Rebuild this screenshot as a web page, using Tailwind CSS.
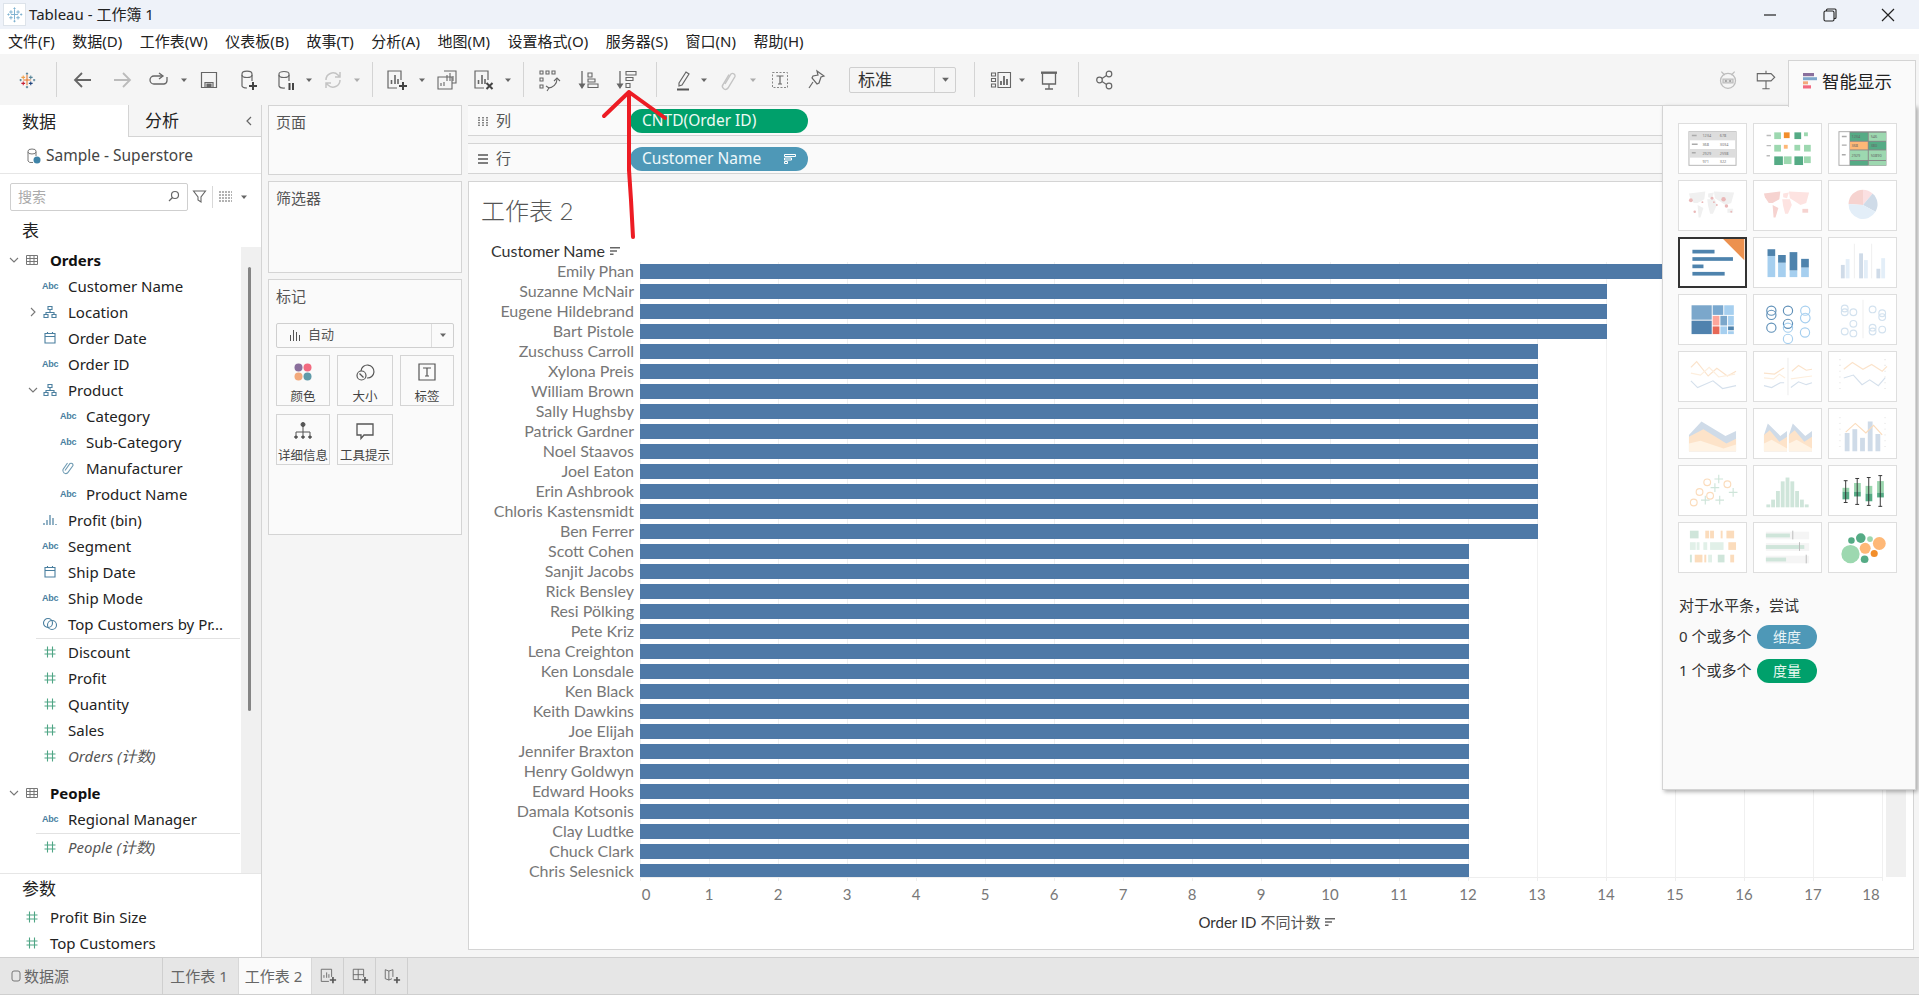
<!DOCTYPE html>
<html lang="zh">
<head>
<meta charset="UTF-8">
<title>Tableau - 工作簿 1</title>
<script src="https://cdn.jsdelivr.net/npm/@tailwindcss/browser@4"></script>
</head>
<body class="relative h-[995px] w-[1919px] overflow-hidden bg-[#f5f5f5] font-['Noto_Sans','Noto_Sans_CJK_SC',sans-serif] text-[15px] text-[#333]">

<svg class="hidden">
  <symbol id="dd" viewBox="0 0 8 8"><path d="M1 2.500h6L4 6z" fill="#666"/></symbol>
  <symbol id="logo" viewBox="0 0 24 24" fill="none" stroke-width="1.400">
    <path d="M12 5v14M7 12h10" stroke="#e8762b"/><path d="M7 6v5M4.500 8.500h5" stroke="#f0a04b"/><path d="M17 6v5M14.500 8.500h5" stroke="#59879b"/>
    <path d="M7 14v5M4.500 16.500h5" stroke="#c72035"/><path d="M17 14v5M14.500 16.500h5" stroke="#1f447e"/>
    <path d="M12 2v3M10.500 3.500h3M12 20v3M10.500 21.500h3M2 12h3M3.500 10.500v3M20 12h3M21.500 10.500v3" stroke="#5b879b"/>
  </symbol>
  <symbol id="logo-pale" viewBox="0 0 24 24" fill="none" stroke-width="1.400" stroke="#7fb2d0">
    <path d="M12 5v14M7 12h10M7 6v5M4.500 8.500h5M17 6v5M14.500 8.500h5M7 14v5M4.500 16.500h5M17 14v5M14.500 16.500h5M12 2v3M10.500 3.500h3M12 20v3M10.500 21.500h3M2 12h3M3.500 10.500v3M20 12h3M21.500 10.500v3"/>
  </symbol>
  <symbol id="tab-orders" viewBox="0 0 16 16" fill="none" stroke="#777"><path d="M2.500 3.500h11v9h-11zM2.500 6.500h11M2.500 9.500h11M6 3.500v9M10 3.500v9"/></symbol>
  <symbol id="hier" viewBox="0 0 16 16" fill="none" stroke="#4a7f9f" stroke-width="1.100"><path d="M6 2.500h4v3H6zM2 10.500h4v3H2zM10 10.500h4v3h-4zM8 5.500v3M4 10.500v-2h8v2"/></symbol>
  <symbol id="cal" viewBox="0 0 16 16" fill="none" stroke="#4a7f9f" stroke-width="1.100"><path d="M3 3.500h10v9.500H3zM3 6.500h10M5.500 2v2M10.500 2v2"/></symbol>
  <symbol id="clip" viewBox="0 0 16 16" fill="none" stroke="#6f9bb3" stroke-width="1.100"><path d="M5 10.500l5-7a2 2 0 0 1 3 2l-5.500 7.500a3 3 0 0 1-4.500-3.500L7.500 3"/></symbol>
  <symbol id="bin" viewBox="0 0 16 16" stroke="#4a7f9f" stroke-width="1.200"><path d="M2 13v-2M5 13V8M8 13V3M11 13V6M14 13v-1"/></symbol>
  <symbol id="sets" viewBox="0 0 16 16" fill="none" stroke="#4a7f9f" stroke-width="1.100"><circle cx="6" cy="7" r="4.500"/><circle cx="10" cy="9" r="4.500"/></symbol>
  <symbol id="hash" viewBox="0 0 16 16" stroke="#4fa585" stroke-width="1.100"><path d="M5.500 2.500v11M10.500 2.500v11M2.500 6h11M2.500 10h11"/></symbol>
  <symbol id="sort" viewBox="0 0 12 10" fill="#666"><path d="M1 1h10v1.500H1zM1 4.200h7v1.500H1zM1 7.400h3.500v1.500H1z"/></symbol>
  <symbol id="newstuff" viewBox="0 0 20 20" fill="none"><path d="M14 11V2.500H2.500V16H11" stroke="#666"/><path d="M5.500 12V9M8.500 12V6M11 12V8" stroke="#666"/><path d="M15.500 11v7M12 14.500h7" stroke="#555" stroke-width="1.800"/></symbol>
</svg>

<!-- title bar -->
<div class="flex h-[29px] items-center justify-between bg-[#eef2f9]">
  <div class="flex items-center">
    <svg class="ml-[3px] h-[23px] w-[23px] border border-[#dde3ea] bg-white p-[2px]"><use href="#logo-pale"/></svg>
    <span class="ml-[3px] text-[15px] text-[#222]">Tableau - 工作簿 1</span>
  </div>
  <div class="flex items-center">
    <svg class="mr-[46px] h-[14px] w-[14px]" viewBox="0 0 14 14"><path d="M1 7h12" stroke="#222" stroke-width="1.200"/></svg>
    <svg class="mr-[44px] h-[14px] w-[14px]" viewBox="0 0 14 14" fill="none" stroke="#222" stroke-width="1.100"><rect x="1" y="3" width="10" height="10" rx="1.500"/><path d="M3.500 3V2a1 1 0 0 1 1-1H12a1 1 0 0 1 1 1v7.500a1 1 0 0 1-1 1h-1"/></svg>
    <svg class="mr-[24px] h-[14px] w-[14px]" viewBox="0 0 14 14" stroke="#222" stroke-width="1.200"><path d="M1 1l12 12M13 1L1 13"/></svg>
  </div>
</div>

<!-- menu -->
<div class="flex h-[25px] items-center gap-[17.500px] bg-white pl-[8px] text-[15px] text-[#222]">
  <span>文件(F)</span><span>数据(D)</span><span>工作表(W)</span><span>仪表板(B)</span><span>故事(T)</span><span>分析(A)</span><span>地图(M)</span><span>设置格式(O)</span><span>服务器(S)</span><span>窗口(N)</span><span>帮助(H)</span>
</div>

<!-- toolbar -->
<div class="flex h-[51px] items-center bg-[#f5f5f5]">
  <svg class="ml-[18px] h-[18px] w-[18px]"><use href="#logo"/></svg>
  <div class="ml-[20px] h-[35px] w-px bg-[#d4d4d4]"></div>
  <svg class="ml-[14px] h-[24px] w-[24px]" viewBox="0 0 24 24" fill="none" stroke="#666" stroke-width="1.800"><path d="M20 12H5M11 5l-7 7 7 7"/></svg>
  <svg class="ml-[15px] h-[24px] w-[24px]" viewBox="0 0 24 24" fill="none" stroke="#bbb" stroke-width="1.800"><path d="M4 12h15M13 5l7 7-7 7"/></svg>
  <svg class="ml-[13px] h-[24px] w-[24px]" viewBox="0 0 24 24" fill="none" stroke="#666" stroke-width="1.300"><path d="M15 8H7a4 4 0 0 0 0 8h10a3.500 3.500 0 0 0 3-3.500V9"/><path d="M12 5l4 3-4 3"/></svg>
  <svg class="ml-[9px] h-[8px] w-[8px]"><use href="#dd"/></svg>
  <svg class="ml-[9px] h-[24px] w-[24px]" viewBox="0 0 24 24" fill="none" stroke="#666" stroke-width="1.200"><path d="M4.500 4.500h15v15h-15zM8 19.500v-5h8v5"/><path d="M10 16h4v3.500h-4z" fill="#666"/></svg>
  <svg class="ml-[15px] h-[24px] w-[24px]" viewBox="0 0 24 24" fill="none" stroke="#666" stroke-width="1.200"><path d="M6 6a4.500 2.500 0 0 1 10 0v7M6 6v12a5 2.500 0 0 0 5 2"/><path d="M6 7a5 2.500 0 0 0 10 0"/><path d="M17 14v8M13 18h8" stroke="#444" stroke-width="2"/></svg>
  <svg class="ml-[14px] h-[24px] w-[24px]" viewBox="0 0 24 24" fill="none" stroke="#666" stroke-width="1.200"><path d="M5 6a5 2.500 0 0 1 10 0v7M5 6v12a5 2.500 0 0 0 6 2"/><path d="M5 7a5 2.500 0 0 0 10 0"/><path d="M15.500 15v7M19 15v7" stroke="#444" stroke-width="2"/></svg>
  <svg class="ml-[7px] h-[8px] w-[8px]"><use href="#dd"/></svg>
  <svg class="ml-[8px] h-[24px] w-[24px]" viewBox="0 0 24 24" fill="none" stroke="#c4c4c4" stroke-width="1.500"><path d="M5 12a7 7 0 0 1 12-5l2 2M19 12a7 7 0 0 1-12 5l-2-2M19 4v5h-5M5 20v-5h5"/></svg>
  <svg class="ml-[8px] h-[8px] w-[8px] opacity-50"><use href="#dd"/></svg>
  <div class="ml-[11px] h-[35px] w-px bg-[#d4d4d4]"></div>
  <svg class="ml-[12px] h-[24px] w-[24px]" viewBox="0 0 24 24" fill="none" stroke="#666" stroke-width="1.200"><path d="M16 12V3H3v17h9"/><path d="M6.500 16v-4M10 16V7M13 16v-5" stroke-width="1.600"/><path d="M18 14v8M14 18h8" stroke="#444" stroke-width="2"/></svg>
  <svg class="ml-[9px] h-[8px] w-[8px]"><use href="#dd"/></svg>
  <svg class="ml-[9px] h-[24px] w-[24px]" viewBox="0 0 24 24" fill="none" stroke="#666" stroke-width="1.100"><path d="M9 3h12v12h-4M3 9h14v12H3z"/><path d="M12 13V7M15 13V5M18 13V8M6 18v-3M9 18v-4"/></svg>
  <svg class="ml-[13px] h-[24px] w-[24px]" viewBox="0 0 24 24" fill="none" stroke="#666" stroke-width="1.200"><path d="M16 12V3H3v17h9"/><path d="M6.500 16v-4M10 16V7M13 16v-5" stroke-width="1.600"/><path d="M14.500 15l6 6M20.500 15l-6 6" stroke="#444" stroke-width="2"/></svg>
  <svg class="ml-[8px] h-[8px] w-[8px]"><use href="#dd"/></svg>
  <div class="ml-[11px] h-[35px] w-px bg-[#d4d4d4]"></div>
  <svg class="ml-[13px] h-[24px] w-[24px]" viewBox="0 0 24 24" fill="none" stroke="#666" stroke-width="1.100"><path d="M3 3h3v3H3zM9 3h3v3H9zM15 3h3v3h-3zM3 10h3v3H3zM3 17h3v3H3zM11 20a9 9 0 0 0 9-9"/><path d="M17 13l3-3 3 3M9 18l3 2-2 3"/></svg>
  <svg class="ml-[16px] h-[24px] w-[24px]" viewBox="0 0 24 24" fill="none" stroke="#666" stroke-width="1.100"><path d="M5 3v16" stroke-width="1.300"/><path d="M2.500 16h5L5 20z" fill="#666"/><path d="M11 5h4v4h-4zM11 11h7v3h-7zM11 16h10v3.500H11z"/></svg>
  <svg class="ml-[14px] h-[24px] w-[24px]" viewBox="0 0 24 24" fill="none" stroke="#666" stroke-width="1.100"><path d="M5 3v16" stroke-width="1.300"/><path d="M2.500 16h5L5 20z" fill="#666"/><path d="M11 3.500h10V7H11zM11 9.500h7v3h-7zM11 15.500h4v4h-4z"/></svg>
  <div class="ml-[17px] h-[35px] w-px bg-[#d4d4d4]"></div>
  <svg class="ml-[14px] h-[24px] w-[24px]" viewBox="0 0 24 24" fill="none" stroke="#666" stroke-width="1.200"><path d="M8 15l7-11 3 2-7 11-3 1z"/><path d="M6 21.500h12" stroke="#555" stroke-width="2"/></svg>
  <svg class="ml-[5px] h-[8px] w-[8px]"><use href="#dd"/></svg>
  <svg class="ml-[9px] h-[24px] w-[24px]" viewBox="0 0 24 24" fill="none" stroke="#c4c4c4" stroke-width="1.400"><path d="M8 16l6-10a2.500 2.500 0 0 1 4 2.500l-7 11.500a3 3 0 0 1-5-3.500l6-10"/></svg>
  <svg class="ml-[8px] h-[8px] w-[8px] opacity-50"><use href="#dd"/></svg>
  <svg class="ml-[11px] h-[24px] w-[24px]" viewBox="0 0 24 24" fill="none" stroke="#888"><path d="M4.500 4.500h15v15h-15z" stroke-dasharray="2 1.500"/><path d="M8.500 8h7M12 8v8M10 16h4" stroke="#666" stroke-width="1.200"/></svg>
  <svg class="ml-[13px] h-[24px] w-[24px]" viewBox="0 0 24 24" fill="none" stroke="#666" stroke-width="1.200"><path d="M12 3l7 5-3 1-2 6-2 1-5-6 1-2 5-1zM8 14l-4 6"/></svg>
  <div class="ml-[20px] flex h-[26px] w-[107px] items-center rounded-[2px] border border-[#cfcfcf] bg-[#f5f5f5]">
    <span class="flex-1 pl-[8px] text-[17px] text-[#333]">标准</span>
    <div class="flex h-full w-[21px] items-center justify-center border-l border-[#d4d4d4]"><svg class="h-[9px] w-[9px]"><use href="#dd"/></svg></div>
  </div>
  <div class="ml-[18px] h-[35px] w-px bg-[#d4d4d4]"></div>
  <svg class="ml-[14px] h-[24px] w-[24px]" viewBox="0 0 24 24" fill="none" stroke="#666" stroke-width="1.100"><path d="M2.500 5h4v3h-4zM2.500 10.500h4v3h-4zM2.500 16h4v3h-4zM9 4.500h12.500v15H9z"/><path d="M12 17v-4M15 17V8M18 17v-6" stroke-width="1.800"/></svg>
  <svg class="ml-[5px] h-[8px] w-[8px]"><use href="#dd"/></svg>
  <svg class="ml-[11px] h-[24px] w-[24px]" viewBox="0 0 24 24" fill="none" stroke="#666" stroke-width="1.300"><path d="M4 5h16M5.500 5v11h13V5M12 16v5M8 21h8"/><path d="M4 4.500h16" stroke-width="2"/></svg>
  <div class="ml-[17px] h-[35px] w-px bg-[#d4d4d4]"></div>
  <svg class="ml-[14px] h-[24px] w-[24px]" viewBox="0 0 24 24" fill="none" stroke="#666" stroke-width="1.200"><circle cx="16" cy="6" r="2.800"/><circle cx="6.500" cy="12" r="2.800"/><circle cx="16" cy="18" r="2.800"/><path d="M9 10.500l4.500-3M9 13.500l4.500 3"/></svg>
  <div class="flex-1"></div>
  <svg class="mr-[17px] h-[20px] w-[20px]" viewBox="0 0 24 24" fill="none" stroke="#bdbdbd" stroke-width="1.500"><circle cx="12" cy="13" r="9"/><path d="M4 2l4 4M20 2l-4 4"/><path d="M6 11h12v4.500H6z" fill="#ddd"/><circle cx="9.500" cy="13.200" r="1.200" fill="#999" stroke="none"/><circle cx="14.500" cy="13.200" r="1.200" fill="#999" stroke="none"/></svg>
  <svg class="mr-[142px] h-[22px] w-[22px]" viewBox="0 0 24 24" fill="none" stroke="#666" stroke-width="1.200"><path d="M2.500 5h15l4 4-4 4h-15zM12 13v8M8 21.500h8M12 2v3"/></svg>
</div>

<!-- main -->
<div class="flex h-[852px]">
  <!-- data pane -->
  <div class="flex w-[262px] flex-col border-r border-[#d4d4d4] bg-white">
    <div class="flex h-[32px]">
      <div class="flex w-[128px] items-center pl-[22px] pt-[1px] text-[17px] text-[#222]">数据</div>
      <div class="flex flex-1 items-center justify-between border-b border-l border-[#d4d4d4] bg-[#f5f5f5] pl-[16px] pr-[8px] pt-[1px] text-[17px] text-[#222]">分析
        <svg class="h-[12px] w-[8px]" viewBox="0 0 8 12" fill="none" stroke="#666" stroke-width="1.200"><path d="M6 2L2 6l4 4"/></svg>
      </div>
    </div>
    <div class="flex h-[37px] items-center border-b border-[#e6e6e6] pl-[25px] pt-[1px] text-[#444]">
      <svg class="h-[18px] w-[18px]" viewBox="0 0 18 18" fill="none" stroke="#777"><path d="M3 4a4 2 0 0 1 8 0v5M3 4v10a4 2 0 0 0 5 1.500M3 5a4 2 0 0 0 8 0"/><circle cx="12" cy="13" r="3.500" fill="#3f84a8" stroke="none"/></svg>
      <span class="ml-[3px] text-[15.500px]">Sample - Superstore</span>
    </div>
    <div class="flex h-[46px] items-center pl-[10px] pb-[1px]">
      <div class="flex h-[28px] w-[178px] items-center justify-between rounded-[2px] border border-[#cfcfcf] px-[7px] text-[14px] text-[#aaa]">搜索
        <svg class="h-[13px] w-[13px]" viewBox="0 0 13 13" fill="none" stroke="#666" stroke-width="1.200"><circle cx="8" cy="5" r="3.500"/><path d="M5.500 7.500L2 11"/></svg>
      </div>
      <svg class="ml-[4px] h-[15px] w-[15px]" viewBox="0 0 15 15" fill="none" stroke="#666" stroke-width="1.100"><path d="M1.500 2h12L9 8v5l-3-2V8z"/></svg>
      <div class="ml-[5px] h-[22px] w-px bg-[#d8d8d8]"></div>
      <svg class="ml-[6px] h-[13px] w-[13px]" viewBox="0 0 13 13" stroke="#666"><path d="M0 2h13M0 5h13M0 8h13M0 11h13" stroke-dasharray="2 1"/></svg>
      <svg class="ml-[8px] h-[8px] w-[8px]"><use href="#dd"/></svg>
    </div>
    <div class="flex h-[27px] items-start pl-[22px] text-[17px] leading-[22px] text-[#222]">表</div>
    <div class="relative h-[626px] overflow-hidden" id="fields"></div>
    <div class="border-t border-[#e6e6e6]">
      <div class="flex h-[30px] items-center pl-[22px] text-[17px] text-[#222]">参数</div>
      <div class="flex h-[26px] items-center pl-[24px]"><svg class="h-[16px] w-[16px]"><use href="#hash"/></svg><span class="ml-[10px] text-[#222]">Profit Bin Size</span></div>
      <div class="flex h-[26px] items-center pl-[24px]"><svg class="h-[16px] w-[16px]"><use href="#hash"/></svg><span class="ml-[10px] text-[#222]">Top Customers</span></div>
    </div>
  </div>

  <!-- cards column -->
  <div class="flex w-[206px] flex-col gap-[6px] px-[6px] text-[15px] text-[#555]">
    <div class="h-[70px] border border-[#d4d4d4] bg-[#fafafa] px-[7px] py-[5px]">页面</div>
    <div class="h-[92px] border border-[#d4d4d4] bg-[#fafafa] px-[7px] py-[5px]">筛选器</div>
    <div class="h-[256px] border border-[#d4d4d4] bg-[#fafafa] px-[7px] py-[5px]">
      <div>标记</div>
      <div class="mt-[15px] flex h-[25px] items-center rounded-[2px] border border-[#cfcfcf] bg-[#fafafa] text-[13px]">
        <svg class="ml-[11px] h-[14px] w-[14px]" viewBox="0 0 14 14" stroke="#555"><path d="M2.500 13V7M5.500 13V2M8.500 13V4M11.500 13V7"/></svg>
        <span class="ml-[6px] flex-1">自动</span>
        <div class="flex h-full w-[22px] items-center justify-center border-l border-[#ddd]"><svg class="h-[8px] w-[8px]"><use href="#dd"/></svg></div>
      </div>
      <div class="mt-[7px] grid grid-cols-[54px_56px_54px] gap-x-[7px] gap-y-[8px] text-[12.500px] text-[#444]">
        <div class="flex h-[51px] flex-col items-center border border-[#d4d4d4] pt-[6px]">
          <svg class="h-[20px] w-[20px]" viewBox="0 0 20 20"><circle cx="5.500" cy="5.500" r="4" fill="#8a6f9c"/><circle cx="14.500" cy="5.500" r="4" fill="#f26a80"/><circle cx="5.500" cy="14.500" r="4" fill="#f2a97c"/><circle cx="14.500" cy="14.500" r="4" fill="#5f9aa8"/></svg>
          <span class="mt-[7px] leading-[16px]">颜色</span></div>
        <div class="flex h-[51px] flex-col items-center border border-[#d4d4d4] pt-[6px]">
          <svg class="h-[20px] w-[20px]" viewBox="0 0 20 20" fill="none" stroke="#555" stroke-width="1.200"><path d="M6 9a6.500 6.500 0 1 1 6 7"/><circle cx="6.500" cy="13.500" r="4.500"/><path d="M4.500 11.500l4 4"/></svg>
          <span class="mt-[7px] leading-[16px]">大小</span></div>
        <div class="flex h-[51px] flex-col items-center border border-[#d4d4d4] pt-[6px]">
          <svg class="h-[20px] w-[20px]" viewBox="0 0 20 20" fill="none" stroke="#555" stroke-width="1.200"><path d="M2 2h16v16H2zM6 6h8M10 6v8M8 14h4"/></svg>
          <span class="mt-[7px] leading-[16px]">标签</span></div>
        <div class="flex h-[51px] flex-col items-center border border-[#d4d4d4] pt-[6px]">
          <svg class="h-[20px] w-[20px]" viewBox="0 0 20 20" fill="#555" stroke="#555"><circle cx="10" cy="3.500" r="2"/><circle cx="3" cy="16" r="1.300"/><circle cx="10" cy="16" r="1.300"/><circle cx="17" cy="16" r="1.300"/><path d="M10 5v9M3 14v-3h14v3" fill="none"/></svg>
          <span class="mt-[7px] whitespace-nowrap leading-[16px]">详细信息</span></div>
        <div class="flex h-[51px] flex-col items-center border border-[#d4d4d4] pt-[6px]">
          <svg class="h-[20px] w-[20px]" viewBox="0 0 20 20" fill="none" stroke="#555" stroke-width="1.300"><path d="M2 3h16v11H9l-3 3.500V14H2z"/></svg>
          <span class="mt-[7px] whitespace-nowrap leading-[16px]">工具提示</span></div>
      </div>
    </div>
  </div>

  <!-- worksheet -->
  <div class="flex w-[1446px] flex-col">
    <div class="flex h-[31px] items-center border-y border-[#d4d4d4] bg-[#fafafa] text-[#555]">
      <svg class="ml-[9px] h-[12px] w-[12px]" viewBox="0 0 12 12" stroke="#555" stroke-width="1.400"><path d="M2 2v9M6 2v9M10 2v9" stroke-dasharray="1.500 1"/></svg>
      <span class="ml-[7px] w-[134px]">列</span>
      <div class="flex h-[24px] w-[178px] items-center rounded-full bg-[#00a06b] pl-[12px] pt-[1px] text-[15.500px] text-[#eefaf4]">CNTD(Order ID)</div>
    </div>
    <div class="mt-[7px] flex h-[31px] items-center border-y border-[#d4d4d4] bg-[#fafafa] text-[#555]">
      <svg class="ml-[9px] h-[12px] w-[12px]" viewBox="0 0 12 12" stroke="#555" stroke-width="1.400"><path d="M1 2h10M1 6h10M1 10h10"/></svg>
      <span class="ml-[7px] w-[134px]">行</span>
      <div class="flex h-[24px] w-[178px] items-center justify-between rounded-full bg-[#4e98b7] pl-[12px] pr-[12px] pt-[1px] text-[15.500px] text-[#eef8fb]">Customer Name
        <svg class="h-[10px] w-[12px]" viewBox="0 0 12 10" fill="none" stroke="#fff"><path d="M.5.500h11v2H.5zM.5 4h7v2h-7zM.5 7.500h3v2h-3z"/></svg>
      </div>
    </div>
    <div class="mt-[7px] h-[769px] border border-[#d4d4d4] bg-white font-['Lato','Noto_Sans_CJK_SC',sans-serif]">
      <div class="flex h-[58px] items-center pl-[12px] text-[24px] font-light text-[#555]">工作表 2</div>
      <div class="flex h-[21px] items-center pl-[22px] text-[16px] text-[#333]">Customer Name<svg class="ml-[4px] h-[10px] w-[12px]"><use href="#sort"/></svg></div>
      <div class="relative mt-[1px] h-[615px]" id="plot"></div>
      <div class="relative h-[34px] text-[15px] text-[#777]" id="axis"></div>
      <div class="flex items-center justify-center pl-[153px] text-[15px] text-[#555]"><span class="text-[#333]">Order ID</span><span class="ml-[4px]">不同计数</span><svg class="ml-[4px] h-[10px] w-[12px]"><use href="#sort"/></svg></div>
    </div>
  </div>
</div>

<!-- sheet tabs -->
<div class="flex h-[38px] items-stretch border-y border-[#cfcfcf] bg-[#e6e6e6] text-[15px] text-[#666]">
  <div class="flex w-[163px] items-center border-r border-[#cfcfcf] pl-[11px]">
    <svg class="h-[12px] w-[10px]" viewBox="0 0 10 12" fill="none" stroke="#777"><rect x="1" y="1" width="8" height="10" rx="2"/></svg>
    <span class="ml-[3px]">数据源</span>
  </div>
  <div class="flex w-[75px] items-center justify-center pr-[3px] text-[#666]">工作表 1</div>
  <div class="flex w-[74px] items-center justify-center border-x border-[#d8d8d8] bg-[#fafafa] pr-[3px]">工作表 2</div>
  <div class="flex w-[32px] items-center justify-center border-r border-[#cfcfcf]"><svg class="h-[18px] w-[18px]"><use href="#newstuff"/></svg></div>
  <div class="flex w-[32px] items-center justify-center border-r border-[#cfcfcf]"><svg class="h-[18px] w-[18px]" viewBox="0 0 20 20" fill="none" stroke="#666"><path d="M2.500 2.500H14V11M2.500 2.500V14H11M2.500 8.500H14M8 2.500V14"/><path d="M15.500 11v7M12 14.500h7" stroke="#555" stroke-width="1.800"/></svg></div>
  <div class="flex w-[32px] items-center justify-center border-r border-[#cfcfcf]"><svg class="h-[18px] w-[18px]" viewBox="0 0 20 20" fill="none" stroke="#666"><path d="M2.500 3l4 1.500L11 3v8M2.500 3v10l4 1.500L10 13M6.500 4.500v10"/><path d="M15.500 11v7M12 14.500h7" stroke="#555" stroke-width="1.800"/></svg></div>
</div>

<!-- show me panel -->
<div class="absolute left-[1662px] top-[105px] h-[685px] w-[254px] border border-[#d4d4d4] bg-[#fafafa] pl-[15px] pt-[17px] shadow-[2px_2px_4px_rgba(0,0,0,0.3)]">
  <div class="absolute left-[125px] top-[-46px] flex h-[47px] w-[128px] items-center border-x border-t border-[#d4d4d4] bg-[#fafafa] pb-[6px] pl-[14px] text-[17.500px] text-[#222]">
    <svg class="h-[16px] w-[14px]" viewBox="0 0 14 16"><rect width="11" height="3.200" fill="#8a6f9c"/><rect y="4.200" width="14" height="3" fill="#7fa8cc"/><rect y="8.300" width="5" height="3" fill="#f2a97c"/><rect y="12.300" width="8" height="3.200" fill="#f26a80"/></svg>
    <span class="ml-[5px]">智能显示</span>
  </div>
  <div class="grid grid-cols-[69px_69px_69px] gap-[6px]">
    <!-- text table -->
    <svg class="h-[51px] w-[69px] border border-[#dedede] bg-white" viewBox="0 0 69 51"><rect x="10" y="8" width="49" height="35" fill="#fff" stroke="#b5b5b5"/><rect x="10" y="8" width="49" height="9" fill="#ddd"/><rect x="10" y="26" width="49" height="9" fill="#ddd"/><path d="M13 12h5M13 21h6M13 30h4" stroke="#aaa" stroke-width="1.500"/><g font-size="4" fill="#777"><text x="24" y="14">1234</text><text x="42" y="14">678</text><text x="24" y="23">368</text><text x="42" y="23">3034</text><text x="24" y="32">2929</text><text x="42" y="32">2598</text><text x="24" y="41">971</text><text x="42" y="41">322</text></g></svg>
    <!-- heat map -->
    <svg class="h-[51px] w-[69px] border border-[#dedede] bg-white" viewBox="0 0 69 51"><path d="M12.700 12h4.600M12.700 22.500h4.600M12.700 33h3.500" stroke="#bbb" stroke-width="1.500"/><g fill="#9dd8b0"><rect x="20.700" y="8.700" width="7" height="7"/><rect x="51.700" y="8.700" width="4" height="4"/><rect x="20.700" y="21.700" width="7" height="7"/><rect x="41.700" y="21.700" width="6" height="6"/><rect x="51.700" y="21.700" width="7" height="7"/><rect x="30.700" y="33.700" width="8" height="8"/><rect x="51.700" y="33.700" width="7" height="7"/></g><g fill="#55ab85"><rect x="41.700" y="8.700" width="7" height="7"/><rect x="20.700" y="33.700" width="9" height="9"/><rect x="41.700" y="33.700" width="9" height="9"/></g><rect x="30.700" y="8.700" width="6" height="6" fill="#f28e2b"/><rect x="30.700" y="21.700" width="4" height="4" fill="#feb877"/></svg>
    <!-- highlight table -->
    <svg class="h-[51px] w-[69px] border border-[#dedede] bg-white" viewBox="0 0 69 51"><rect x="10" y="8" width="49" height="35" fill="#fff" stroke="#aaa"/><rect x="21" y="8" width="38" height="35" fill="#888"/><rect x="21.500" y="9" width="18.500" height="8.500" fill="#55ab85"/><rect x="41" y="9" width="18" height="8.500" fill="#9dd8b0"/><rect x="21.500" y="18.500" width="18.500" height="8" fill="#feb877"/><rect x="41" y="18.500" width="18" height="8" fill="#55ab85"/><rect x="21.500" y="27.500" width="18.500" height="10" fill="#9dd8b0"/><rect x="41" y="27.500" width="18" height="10" fill="#9dd8b0"/><rect x="21.500" y="38.500" width="18.500" height="4.500" fill="#55ab85"/><rect x="41" y="38.500" width="18" height="4.500" fill="#9dd8b0"/><path d="M13 13h5M13 22h5M13 32h4" stroke="#aaa" stroke-width="1.500"/><g font-size="4" fill="#666"><text x="23" y="15">1234</text><text x="43" y="15">546</text><text x="23" y="24">368</text><text x="43" y="24">380</text><text x="23" y="34">2929</text><text x="43" y="34">50890</text></g></svg>
    <!-- symbol map -->
    <svg class="h-[51px] w-[69px] border border-[#dedede] bg-white" viewBox="0 0 69 51"><path d="M10 13l17-2-1 8-7 4-4 0-4-6zM19 25l6 3-3 10-2 0zM30 13l6-1-2 6-4-1zM29 19l8 0 2 6-4 9-3 0-2-8zM36 11l21 1-3 11-6 2-6-4-5-3zM50 29l6 0 0 4-6 0z" fill="#f0f0f0"/><g fill="#eab8b8"><circle cx="12" cy="20" r="2"/><circle cx="34" cy="18" r="1.500"/><circle cx="46" cy="19" r="2.300"/><circle cx="49" cy="26" r="1.800"/><circle cx="24" cy="22" r="1"/><circle cx="36" cy="22" r="1"/><circle cx="39" cy="25" r="1"/><circle cx="16" cy="32" r="1.300"/><circle cx="54" cy="32" r="1"/></g></svg>
    <!-- filled map -->
    <svg class="h-[51px] w-[69px] border border-[#dedede] bg-white" viewBox="0 0 69 51"><path d="M10 13l17-2-1 8-7 4-4 0-4-6z" fill="#f6d3d0"/><path d="M19 25l6 3-3 10-2 0z" fill="#f6d3d0"/><path d="M30 13l6-1-2 6-4-1zM36 11l21 1-3 11-6 2-6-4-5-3z" fill="#fde3e1"/><path d="M29 19l8 0 2 6-4 9-3 0-2-8z" fill="#fde3e1"/><path d="M50 29l6 0 0 4-6 0z" fill="#f6d3d0"/></svg>
    <!-- pie -->
    <svg class="h-[51px] w-[69px] border border-[#dedede] bg-white" viewBox="0 0 69 51"><path d="M35 25L20 24a15 15 0 0 1 15-15z" fill="#f6d3d0"/><path d="M35 25V9a15 15 0 0 1 10 4z" fill="#fbe0e2"/><path d="M35 25l10-12a15 15 0 0 1 3 19z" fill="#cfdbe8"/><path d="M35 25l13 7a15 15 0 0 1-28-8z" fill="#e3eef8"/></svg>
    <!-- hbar, selected -->
    <svg class="h-[51px] w-[69px] border-2 border-[#333] bg-white" viewBox="0 0 69 51"><path d="M46 0h23v23z" fill="#ec914f"/><g fill="#4e83ad"><rect x="12.700" y="11.700" width="24" height="4"/><rect x="12.700" y="19.700" width="44" height="4"/><rect x="12.700" y="27.700" width="12" height="4"/><rect x="12.700" y="35.700" width="35" height="4"/></g></svg>
    <!-- stacked bars -->
    <svg class="h-[51px] w-[69px] border border-[#dedede] bg-white" viewBox="0 0 69 51"><g fill="#a6cfef"><rect x="13.700" y="18.700" width="8" height="22"/><rect x="24.700" y="25.700" width="8" height="15"/><rect x="36.700" y="33.700" width="8" height="7"/><rect x="48.700" y="30.700" width="8" height="10"/></g><g fill="#4e83ad"><rect x="13.700" y="11.700" width="8" height="7"/><rect x="24.700" y="17.700" width="8" height="8"/><rect x="36.700" y="14.700" width="8" height="19"/><rect x="48.700" y="21.700" width="8" height="9"/></g></svg>
    <!-- side by side bars -->
    <svg class="h-[51px] w-[69px] border border-[#dedede] bg-white" viewBox="0 0 69 51"><path d="M26 6v36M44 6v36" stroke="#eee"/><g fill="#cfdbe8"><rect x="12" y="28" width="4" height="14"/><rect x="31" y="16" width="4" height="26"/><rect x="49" y="32" width="4" height="10"/></g><g fill="#e3eef8"><rect x="17" y="22" width="4" height="20"/><rect x="36" y="23" width="4" height="19"/><rect x="54" y="21" width="4" height="21"/></g></svg>
    <!-- treemap -->
    <svg class="h-[51px] w-[69px] border border-[#dedede] bg-white" viewBox="0 0 69 51"><rect x="12.700" y="10.700" width="21" height="15" fill="#7ba7cb"/><rect x="12.700" y="26.700" width="21" height="14" fill="#5082ae"/><rect x="34.700" y="10.700" width="11" height="10" fill="#79a8cf"/><rect x="46.700" y="10.700" width="10" height="10" fill="#a6cfef"/><rect x="34.700" y="21.700" width="7" height="10" fill="#fda69b"/><rect x="34.700" y="32.700" width="7" height="8" fill="#e76857"/><rect x="42.700" y="21.700" width="7" height="10" fill="#7ba7cb"/><rect x="50.700" y="21.700" width="6" height="10" fill="#a6cfef"/><rect x="42.700" y="32.700" width="7" height="8" fill="#a6cfef"/><rect x="50.700" y="32.700" width="6" height="4" fill="#4e83ad"/><rect x="50.700" y="37.700" width="6" height="3" fill="#a6cfef"/></svg>
    <!-- circle views -->
    <svg class="h-[51px] w-[69px] border border-[#dedede] bg-white" viewBox="0 0 69 51" fill="none" stroke-width="1.200"><g stroke="#5f90b8"><circle cx="17.700" cy="16.300" r="4.800"/><circle cx="17.700" cy="20.700" r="4.800"/><circle cx="35" cy="16.300" r="4.800"/><circle cx="35" cy="30" r="4.800"/><circle cx="17.700" cy="34" r="4.800"/></g><g stroke="#a6cfef"><circle cx="35" cy="34" r="4.800"/><circle cx="53" cy="16.300" r="4.800"/><circle cx="53" cy="24" r="5"/><circle cx="52.700" cy="39" r="4.800"/><circle cx="35" cy="45.700" r="4.800"/></g></svg>
    <!-- side by side circles -->
    <svg class="h-[51px] w-[69px] border border-[#dedede] bg-white" viewBox="0 0 69 51" fill="none"><path d="M35 5v40" stroke="#eee"/><g stroke="#d3e2ef" stroke-width="1.200"><circle cx="16" cy="14" r="3.500"/><circle cx="16" cy="18" r="3.500"/><circle cx="25" cy="18" r="3.500"/><circle cx="25" cy="30" r="3.500"/><circle cx="16" cy="38" r="3.500"/><circle cx="25" cy="40" r="3.500"/><circle cx="45" cy="15" r="3.500"/><circle cx="55" cy="19" r="3.500"/><circle cx="55" cy="23" r="3.500"/><circle cx="45" cy="34" r="3.500"/><circle cx="45" cy="38" r="3.500"/><circle cx="55" cy="36" r="3.500"/></g></svg>
    <!-- lines -->
    <svg class="h-[51px] w-[69px] border border-[#dedede] bg-white" viewBox="0 0 69 51" fill="none" stroke-width="1.200"><path d="M12 16l6-6 12 15 9-8 11 8 9-5" stroke="#fbe3cb"/><path d="M12 22l10 2 9-8 10 10 17-3" stroke="#fdeedd"/><path d="M12 30l7 7 16-7 10 8 14-3" stroke="#d5e0ec"/></svg>
    <svg class="h-[51px] w-[69px] border border-[#dedede] bg-white" viewBox="0 0 69 51" fill="none" stroke-width="1.200"><path d="M35 6v39" stroke="#eee"/><path d="M10 22l11 1 9-6 1 0M39 20l7-6 8 5 6-1" stroke="#fbe3cb"/><path d="M10 27l10 1 6-5 6 4M38 28l14-2 8-1" stroke="#fdeedd"/><path d="M10 35l8 2 9-5 4 0M38 37l8-6 8 3 6-2" stroke="#d5e0ec"/></svg>
    <svg class="h-[51px] w-[69px] border border-[#dedede] bg-white" viewBox="0 0 69 51" fill="none" stroke-width="1.200"><path d="M10 8h2M10 14h2M10 20h2M10 26h2M10 32h2M10 38h2M57 8h2M57 14h2M57 20h2M57 26h2M57 32h2M57 38h2" stroke="#eee"/><path d="M15 18l9-7 11 7 9-5 11 7 5-5" stroke="#fbe3cb"/><path d="M15 27l10-3 9 10 8-5 9 6 7-8" stroke="#d5e0ec"/></svg>
    <!-- areas -->
    <svg class="h-[51px] w-[69px] border border-[#dedede] bg-white" viewBox="0 0 69 51"><path d="M10 27l13-14 25 15 11-5v21H10z" fill="#cfdbe8"/><path d="M10 29l15-8 24 15 10-5v13H10z" fill="#fde3c9"/><path d="M10 36l12-3 24 8 13-4v7H10z" fill="#fff3e4"/></svg>
    <svg class="h-[51px] w-[69px] border border-[#dedede] bg-white" viewBox="0 0 69 51"><path d="M10 27l4-12 13 13 7-5v21H10z" fill="#cfdbe8"/><path d="M36 27l4-12 13 13 7-5v21H36z" fill="#cfdbe8"/><path d="M10 27l6-5 10 12 8-5v15H10z" fill="#fde3c9"/><path d="M36 27l6-5 10 12 8-5v15H36z" fill="#fde3c9"/><path d="M10 36l8-4 16 9v3H10z" fill="#fff3e4"/><path d="M36 36l8-4 16 9v3H36z" fill="#fff3e4"/></svg>
    <svg class="h-[51px] w-[69px] border border-[#dedede] bg-white" viewBox="0 0 69 51"><path d="M10 9h2M10 15h2M10 21h2M10 27h2M10 33h2M10 39h2M57 9h2M57 15h2M57 21h2M57 27h2M57 33h2M57 39h2" stroke="#eee"/><g fill="#cfdbe8"><rect x="16" y="25" width="5" height="19"/><rect x="24" y="21" width="5" height="23"/><rect x="32" y="30" width="5" height="14"/><rect x="40" y="13" width="5" height="31"/><rect x="48" y="26" width="5" height="18"/></g><path d="M17 24l10-9 11 10 8-8 9 10" fill="none" stroke="#fbdcbc" stroke-width="1.200"/></svg>
    <!-- scatter -->
    <svg class="h-[51px] w-[69px] border border-[#dedede] bg-white" viewBox="0 0 69 51" fill="none" stroke-width="1.200"><g stroke="#fbdcbc"><circle cx="29" cy="17" r="3.500"/><circle cx="50" cy="19" r="3.500"/><circle cx="21" cy="27" r="3.500"/><circle cx="32" cy="31" r="3.500"/><circle cx="15" cy="38" r="3.500"/></g><path d="M38 10v9M33.500 14.500h9M53 24v9M48.500 28.500h9M39 32v9M34.500 36.500h9M34 19v9M29.500 23.500h9M24 32v9M19.500 36.500h9" stroke="#cfe5da" transform="translate(3 -1)"/></svg>
    <!-- histogram -->
    <svg class="h-[51px] w-[69px] border border-[#dedede] bg-white" viewBox="0 0 69 51"><g fill="#cfe5da"><rect x="12.500" y="40" width="4" height="3"/><rect x="17.500" y="35" width="4" height="8"/><rect x="22.500" y="26" width="4" height="17"/><rect x="27.500" y="16" width="4" height="27"/><rect x="32.500" y="12" width="4" height="31"/><rect x="37.500" y="16" width="4" height="27"/><rect x="42.500" y="26" width="4" height="17"/><rect x="47.500" y="35" width="4" height="8"/><rect x="52.500" y="40" width="4" height="3"/></g></svg>
    <!-- box plot -->
    <svg class="h-[51px] w-[69px] border border-[#dedede] bg-white" viewBox="0 0 69 51"><rect x="13.700" y="22.700" width="7" height="4" fill="#9ad6ae"/><rect x="13.700" y="26.700" width="7" height="8" fill="#55ab85"/><rect x="25.700" y="17.700" width="7" height="9" fill="#9ad6ae"/><rect x="25.700" y="26.700" width="7" height="5" fill="#55ab85"/><rect x="37.700" y="20.700" width="7" height="8" fill="#9ad6ae"/><rect x="37.700" y="28.700" width="7" height="8" fill="#55ab85"/><rect x="49.700" y="15.700" width="7" height="12" fill="#9ad6ae"/><rect x="49.700" y="27.700" width="7" height="5" fill="#55ab85"/><path d="M17 15.300V38M15 15.300h4M15 38h4M29 13v27M27 13h4M27 40h4M41 12v29M39 12h4M39 41h4M53 10v32M51 10h4M51 42h4" stroke="#333" stroke-width="1" fill="none"/></svg>
    <!-- gantt -->
    <svg class="h-[51px] w-[69px] border border-[#dedede] bg-white" viewBox="0 0 69 51"><g fill="#cfe5da"><rect x="11" y="8" width="9" height="8"/><rect x="11" y="33" width="2" height="8"/><rect x="40" y="33" width="7" height="8"/></g><g fill="#fbdcbc"><rect x="27" y="8" width="4" height="8"/><rect x="32" y="8" width="4" height="8"/><rect x="43" y="8" width="2" height="8"/><rect x="49" y="8" width="8" height="8"/><rect x="51" y="20" width="8" height="8"/><rect x="16" y="33" width="8" height="8"/><rect x="26" y="33" width="2" height="8"/><rect x="53" y="33" width="4" height="8"/></g><g fill="#e1f0e8"><rect x="11" y="20" width="6" height="8"/><rect x="18" y="20" width="3" height="8"/><rect x="25" y="20" width="4" height="8"/><rect x="32" y="20" width="14" height="8"/><rect x="30" y="33" width="4" height="8"/></g></svg>
    <!-- bullet -->
    <svg class="h-[51px] w-[69px] border border-[#dedede] bg-white" viewBox="0 0 69 51"><g fill="#f5f5f5"><rect x="12" y="9" width="45" height="8"/><rect x="12" y="21" width="45" height="8"/><rect x="12" y="34" width="45" height="8"/></g><g fill="#cfe5da"><rect x="12" y="11" width="25" height="4"/><rect x="12" y="23" width="40" height="4"/><rect x="12" y="36" width="21" height="4"/></g><path d="M40 8v9M47 20v9M54 33v9" stroke="#bbb" stroke-width="1"/></svg>
    <!-- bubbles -->
    <svg class="h-[51px] w-[69px] border border-[#dedede] bg-white" viewBox="0 0 69 51"><circle cx="22" cy="32.300" r="9.500" fill="#9dd8b0"/><circle cx="23" cy="18.300" r="3.400" fill="#55ab85"/><circle cx="32.700" cy="15.700" r="5" fill="#55ab85"/><circle cx="42.300" cy="16.700" r="3" fill="#9dd8b0"/><circle cx="52" cy="21.300" r="6.700" fill="#feb877"/><circle cx="37.300" cy="26.300" r="5.700" fill="#feb877"/><circle cx="46.700" cy="31.700" r="3.700" fill="#f28e2b"/><circle cx="36.700" cy="37.700" r="4" fill="#55ab85"/></svg>
  </div>
  <div class="mt-[21px] pl-[1px] text-[15px] text-[#333]">对于水平条，尝试</div>
  <div class="mt-[8px] flex h-[24px] items-center text-[15px] text-[#333]"><span class="w-[79px] whitespace-nowrap pl-[1px]">0 个或多个</span><span class="flex h-[24px] w-[60px] items-center justify-center rounded-full bg-[#4e98b7] text-[14px] text-[#e8f4f8]">维度</span></div>
  <div class="mt-[10px] flex h-[24px] items-center text-[15px] text-[#333]"><span class="w-[79px] whitespace-nowrap pl-[1px]">1 个或多个</span><span class="flex h-[24px] w-[60px] items-center justify-center rounded-full bg-[#00a06b] text-[14px] text-[#e8f8f0]">度量</span></div>
</div>

<!-- red arrow drawn over the screenshot -->
<svg class="absolute left-0 top-0" width="1919" height="995" style="pointer-events:none" fill="none" stroke="#ed1c24" stroke-width="4" stroke-linecap="round" stroke-linejoin="round">
  <path d="M604 116L629 92L665 118M629 92L629 170L631 200L633 237"/>
</svg>

<script>
  // fields in the data pane: label, icon, indent, caret
  const fields = [
    { head: "Orders" },
    { name: "Customer Name", icon: "abc" },
    { name: "Location", icon: "hier", caret: "right" },
    { name: "Order Date", icon: "cal" },
    { name: "Order ID", icon: "abc" },
    { name: "Product", icon: "hier", caret: "down" },
    { name: "Category", icon: "abc", nested: true },
    { name: "Sub-Category", icon: "abc", nested: true },
    { name: "Manufacturer", icon: "clip", nested: true },
    { name: "Product Name", icon: "abc", nested: true },
    { name: "Profit (bin)", icon: "bin" },
    { name: "Segment", icon: "abc" },
    { name: "Ship Date", icon: "cal" },
    { name: "Ship Mode", icon: "abc" },
    { name: "Top Customers by Pr...", icon: "sets" },
    { divider: true },
    { name: "Discount", icon: "hash" },
    { name: "Profit", icon: "hash" },
    { name: "Quantity", icon: "hash" },
    { name: "Sales", icon: "hash" },
    { name: "Orders (计数)", icon: "hash", italic: true },
    { gap: true },
    { head: "People" },
    { name: "Regional Manager", icon: "abc" },
    { divider: true },
    { name: "People (计数)", icon: "hash", italic: true }
  ];

  function fieldIcon(icon) {
    if (icon === "abc") return `<span class="w-[16px] text-center font-['Liberation_Sans',sans-serif] text-[9px] font-bold leading-none tracking-[-0.2px] text-[#4a7f9f]">Abc</span>`;
    return `<svg class="h-[16px] w-[16px]"><use href="#${icon}"/></svg>`;
  }

  function caretIcon(dir) {
    if (!dir) return `<span class="w-[12px]"></span>`;
    const d = dir === "down" ? "M2 4l4 4 4-4" : "M4 2l4 4-4 4";
    return `<svg class="h-[12px] w-[12px]" viewBox="0 0 12 12" fill="none" stroke="#777" stroke-width="1.100"><path d="${d}"/></svg>`;
  }

  document.getElementById("fields").innerHTML = fields.map(f => {
    if (f.divider) return `<div class="ml-[36px] h-[2px] w-[204px] border-b border-[#e2e2e2]"></div>`;
    if (f.gap) return `<div class="h-[11px]"></div>`;
    if (f.head) return `<div class="flex h-[26px] items-center pl-[8px]">${caretIcon("down")}<svg class="ml-[4px] h-[16px] w-[16px]"><use href="#tab-orders"/></svg><span class="ml-[10px] font-bold text-[#111]">${f.head}</span></div>`;
    const pad = f.nested ? "pl-[45px]" : "pl-[27px]";
    const text = f.italic ? "italic text-[#555]" : "text-[#222]";
    return `<div class="flex h-[26px] items-center ${pad}">${caretIcon(f.caret)}<span class="ml-[3px] flex w-[16px] justify-center">${fieldIcon(f.icon)}</span><span class="ml-[10px] whitespace-nowrap ${text}">${f.name}</span></div>`;
  }).join("") + `<div class="absolute bottom-0 right-0 top-0 w-[20px] bg-[#f0f0f0]"><div class="absolute left-[7px] top-[20px] h-[444px] w-[3px] rounded-full bg-[#858585]"></div></div>`;

  // bar chart: customer, distinct order count
  const rows = [
    ["Emily Phan", 17], ["Suzanne McNair", 14], ["Eugene Hildebrand", 14], ["Bart Pistole", 14],
    ["Zuschuss Carroll", 13], ["Xylona Preis", 13], ["William Brown", 13], ["Sally Hughsby", 13],
    ["Patrick Gardner", 13], ["Noel Staavos", 13], ["Joel Eaton", 13], ["Erin Ashbrook", 13],
    ["Chloris Kastensmidt", 13], ["Ben Ferrer", 13], ["Scott Cohen", 12], ["Sanjit Jacobs", 12],
    ["Rick Bensley", 12], ["Resi Pölking", 12], ["Pete Kriz", 12], ["Lena Creighton", 12],
    ["Ken Lonsdale", 12], ["Ken Black", 12], ["Keith Dawkins", 12], ["Joe Elijah", 12],
    ["Jennifer Braxton", 12], ["Henry Goldwyn", 12], ["Edward Hooks", 12], ["Damala Kotsonis", 12],
    ["Clay Ludtke", 12], ["Chuck Clark", 12], ["Chris Selesnick", 12]
  ];
  const UNIT = 69;
  const ZERO = 171;

  let plot = "";
  for (let i = 0; i <= 18; i++) {
    plot += `<div class="absolute bottom-0 top-0 w-px bg-[#f0f0f0]" style="left:${ZERO + i * UNIT}px"></div>`;
  }
  plot += `<div class="absolute bottom-0 right-[7px] top-0 w-[20px] bg-[#f0f0f0]"></div>`;
  plot += rows.map(([name, n], i) => `<div class="relative flex h-[20px]">
      <div class="-mt-px w-[165px] whitespace-nowrap text-right text-[16px] leading-[20px] text-[#777]">${name}</div>
      <div class="ml-[6px] mt-[2px] bg-[#4e79a7]" style="width:${n * UNIT + 1}px;height:${i === rows.length - 1 ? 13 : 15}px"></div>
    </div>`).join("");
  document.getElementById("plot").innerHTML = plot;

  // baseline starts at the zero tick, it does not run under the names
  let axis = `<div class="absolute top-0 h-px bg-[#eeeeee]" style="left:${ZERO}px;width:${18 * UNIT}px"></div>`;
  for (let i = 0; i <= 18; i++) {
    const x = ZERO + i * UNIT;
    const center = i === 0 ? x + 6 : i === 18 ? x - 11 : x;
    axis += `<div class="absolute top-0 h-[4px] w-px bg-[#eeeeee]" style="left:${x}px"></div>`;
    axis += `<span class="absolute top-[7px] w-[30px] text-center leading-[20px]" style="left:${center - 15}px">${i}</span>`;
  }
  document.getElementById("axis").innerHTML = axis;
</script>
</body>
</html>
